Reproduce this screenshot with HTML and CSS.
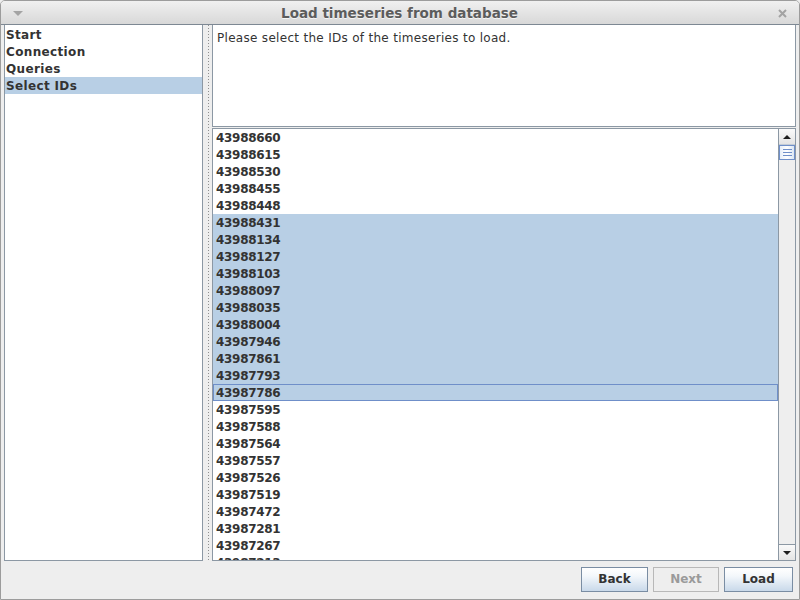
FILE: index.html
```html
<!DOCTYPE html>
<html>
<head>
<meta charset="utf-8">
<link rel="stylesheet" href="styles.css">
</head>
<body>
<div class="window">
  <div class="titlebar">
    <span class="menu-tri"></span>
    <span class="title">Load timeseries from database</span>
    <svg class="close" width="9" height="9" viewBox="0 0 9 9"><path d="M1 1L8 8M8 1L1 8" stroke="#a3a3a3" stroke-width="2"/></svg>
  </div>
  <div class="main">
    <div class="steps">
      <div class="step">Start</div>
      <div class="step">Connection</div>
      <div class="step">Queries</div>
      <div class="step sel">Select IDs</div>
    </div>
    <div class="splitter"><div class="dots"></div></div>
    <div class="right">
      <div class="info">Please select the IDs of the timeseries to load.</div>
      <div class="listbox">
        <div class="items">
          <div class="item">43988660</div>
          <div class="item">43988615</div>
          <div class="item">43988530</div>
          <div class="item">43988455</div>
          <div class="item">43988448</div>
          <div class="item sel">43988431</div>
          <div class="item sel">43988134</div>
          <div class="item sel">43988127</div>
          <div class="item sel">43988103</div>
          <div class="item sel">43988097</div>
          <div class="item sel">43988035</div>
          <div class="item sel">43988004</div>
          <div class="item sel">43987946</div>
          <div class="item sel">43987861</div>
          <div class="item sel">43987793</div>
          <div class="item sel focus">43987786</div>
          <div class="item">43987595</div>
          <div class="item">43987588</div>
          <div class="item">43987564</div>
          <div class="item">43987557</div>
          <div class="item">43987526</div>
          <div class="item">43987519</div>
          <div class="item">43987472</div>
          <div class="item">43987281</div>
          <div class="item">43987267</div>
          <div class="item">43987213</div>
        </div>
        <div class="vscroll">
          <div class="sbtn"><span class="arrow-up"></span></div>
          <div class="thumb"><span></span><span></span><span></span></div>
          <div class="track"></div>
          <div class="sbtn down"><span class="arrow-down"></span></div>
        </div>
      </div>
    </div>
  </div>
  <div class="buttons">
    <button class="btn">Back</button>
    <button class="btn disabled">Next</button>
    <button class="btn">Load</button>
  </div>
</div>
</body>
</html>
```

FILE: styles.css
```css
html, body {
  margin: 0;
  padding: 0;
  width: 800px;
  height: 600px;
  overflow: hidden;
  background: #eeeeee;
}

.window {
  box-sizing: border-box;
  width: 800px;
  height: 600px;
  border: 1px solid #9c9c9c;
  border-radius: 5px 5px 0 0;
  background: #eeeeee;
  display: flex;
  flex-direction: column;
  font-family: "DejaVu Sans", sans-serif;
  color: #333333;
  overflow: hidden;
}

.titlebar {
  height: 23px;
  flex: none;
  border-bottom: 1px solid #7d8893;
  background: linear-gradient(#f0f0f0, #d8d8d8);
  display: grid;
  grid-template-columns: 40px 1fr 40px;
  align-items: center;
}

.menu-tri {
  justify-self: start;
  margin-left: 12px;
  margin-top: 2px;
  width: 0;
  height: 0;
  border-left: 5px solid transparent;
  border-right: 5px solid transparent;
  border-top: 5px solid #a4a4a4;
}

.title {
  text-align: center;
  font-weight: bold;
  font-size: 13.5px;
  color: #5c5c5c;
  text-shadow: 0 1px 0 rgba(255,255,255,0.7);
  padding-right: 1px;
}

.close {
  justify-self: end;
  margin-right: 12px;
  margin-top: 1px;
}

.main {
  height: 536px;
  flex: none;
  display: flex;
  padding: 0 3px;
}

.steps {
  box-sizing: border-box;
  width: 199px;
  flex: none;
  background: #ffffff;
  border: 1px solid #8c98a4;
  border-top: none;
  padding-top: 1px;
}

.step {
  height: 16px;
  padding-top: 1px;
  line-height: 17px;
  font-size: 12px;
  font-weight: bold;
  letter-spacing: 0.35px;
  padding-left: 1px;
  white-space: nowrap;
}

.step.sel {
  background: #b8cfe5;
}

.splitter {
  width: 9px;
  flex: none;
  display: flex;
  justify-content: center;
}

.dots {
  width: 1px;
  margin-left: 1px;
  background-image: linear-gradient(#8e8e8e 1px, transparent 1px);
  background-size: 1px 3px;
}

.right {
  width: 584px;
  flex: none;
  display: flex;
  flex-direction: column;
}

.info {
  box-sizing: border-box;
  height: 102px;
  flex: none;
  background: #ffffff;
  border: 1px solid #8c98a4;
  border-top: none;
  font-size: 12px;
  letter-spacing: 0.3px;
  line-height: 15px;
  padding: 6px 4px;
  color: #333333;
}

.listbox {
  box-sizing: border-box;
  margin-top: 1px;
  flex: 1;
  display: flex;
  border: 1px solid #8c98a4;
  background: #ffffff;
  overflow: hidden;
}

.items {
  flex: 1;
  overflow: hidden;
}

.item {
  height: 16px;
  padding-top: 1px;
  line-height: 17px;
  font-size: 12px;
  font-weight: bold;
  letter-spacing: -0.3px;
  padding-left: 3px;
  white-space: nowrap;
}

.item.sel {
  background: #b8cfe5;
}

.item.focus {
  box-shadow: inset 0 0 0 1px #6f8fc9;
}

.vscroll {
  width: 16px;
  flex: none;
  border-left: 1px solid #8c98a4;
  background: #eeeeee;
  display: flex;
  flex-direction: column;
}

.sbtn {
  height: 16px;
  flex: none;
  box-sizing: border-box;
  border-bottom: 1px solid #c3ccd6;
  background: linear-gradient(#fafafa, #e4e4e4);
  display: flex;
  align-items: center;
  justify-content: center;
}

.sbtn.down {
  border-bottom: none;
  border-top: 1px solid #8c98a4;
}

.arrow-up {
  width: 0;
  height: 0;
  border-left: 4px solid transparent;
  border-right: 4px solid transparent;
  border-bottom: 4px solid #1e1e1e;
}

.arrow-down {
  width: 0;
  height: 0;
  border-left: 4px solid transparent;
  border-right: 4px solid transparent;
  border-top: 4px solid #1e1e1e;
}

.thumb {
  box-sizing: border-box;
  height: 15px;
  flex: none;
  border: 1px solid #6f8fc9;
  background: linear-gradient(90deg, #e6eef8, #ffffff 50%, #dbe6f3);
  display: flex;
  flex-direction: column;
  justify-content: center;
  align-items: center;
  gap: 2px;
}

.thumb span {
  display: block;
  width: 9px;
  height: 1px;
  background: #6f8fc9;
}

.track {
  flex: 1;
}

.buttons {
  flex: 1;
  display: flex;
  justify-content: flex-end;
  align-items: flex-start;
  gap: 5px;
  padding: 6px 6px 0 0;
}

.btn {
  box-sizing: border-box;
  height: 25px;
  padding: 0 16px;
  border: 1px solid #7a8da3;
  border-radius: 0;
  background: linear-gradient(#ffffff, #f3f7fb 35%, #c9d9ea);
  font-family: "DejaVu Sans", sans-serif;
  font-size: 12px;
  font-weight: bold;
  color: #333333;
  line-height: 23px;
}

.btn:first-child {
  width: 67px;
}

.btn.disabled {
  width: 66px;
  border-color: #b8b8b8;
  background: #eeeeee;
  color: #9a9a9a;
}

.btn:last-child {
  width: 69px;
}
```
